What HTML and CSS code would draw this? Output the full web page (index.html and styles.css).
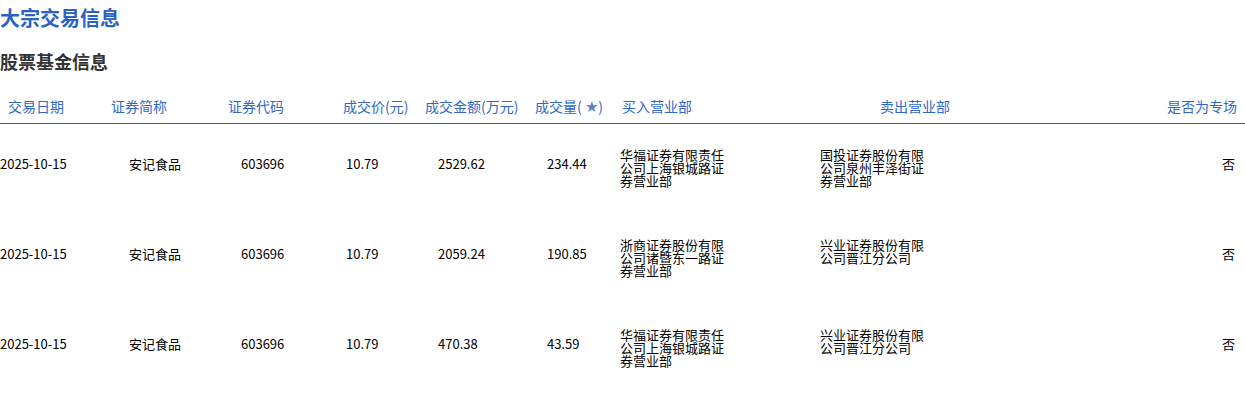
FILE: index.html
```html
<!DOCTYPE html>
<html lang="zh-CN">
<head>
<meta charset="utf-8">
<title>大宗交易信息</title>
<link rel="stylesheet" href="styles.css">
</head>
<body>
<h2 class="title">大宗交易信息</h2>
<h3 class="subtitle">股票基金信息</h3>
<div class="table">
  <div class="thead">
    <div>交易日期</div>
    <div>证券简称</div>
    <div>证券代码</div>
    <div>成交价(元)</div>
    <div>成交金额(万元)</div>
    <div>成交量( <span class="star">★</span>)</div>
    <div>买入营业部</div>
    <div>卖出营业部</div>
    <div class="end">是否为专场</div>
  </div>
  <div class="row">
    <div class="cell">2025-10-15</div>
    <div class="cell">安记食品</div>
    <div class="cell">603696</div>
    <div class="cell">10.79</div>
    <div class="cell">2529.62</div>
    <div class="cell">234.44</div>
    <div class="branch">华福证券有限责任公司上海银城路证券营业部</div>
    <div class="branch">国投证券股份有限公司泉州丰泽街证券营业部</div>
    <div class="cell end">否</div>
  </div>
  <div class="row">
    <div class="cell">2025-10-15</div>
    <div class="cell">安记食品</div>
    <div class="cell">603696</div>
    <div class="cell">10.79</div>
    <div class="cell">2059.24</div>
    <div class="cell">190.85</div>
    <div class="branch">浙商证券股份有限公司诸暨东一路证券营业部</div>
    <div class="branch">兴业证券股份有限公司晋江分公司</div>
    <div class="cell end">否</div>
  </div>
  <div class="row">
    <div class="cell">2025-10-15</div>
    <div class="cell">安记食品</div>
    <div class="cell">603696</div>
    <div class="cell">10.79</div>
    <div class="cell">470.38</div>
    <div class="cell">43.59</div>
    <div class="branch">华福证券有限责任公司上海银城路证券营业部</div>
    <div class="branch">兴业证券股份有限公司晋江分公司</div>
    <div class="cell end">否</div>
  </div>
</div>
</body>
</html>
```
FILE: styles.css
```css
html, body {
  margin: 0;
  padding: 0;
  background: #fff;
}
body {
  font-family: "Noto Sans CJK SC", "Noto Sans", sans-serif;
  color: #000;
  width: 1245px;
}
.title {
  margin: 0;
  font-size: 20px;
  line-height: 36px;
  font-weight: 700;
  color: #2962c4;
}
.subtitle {
  margin: 12px 0 0;
  font-size: 18px;
  line-height: 26px;
  font-weight: 700;
  color: #333;
}
.thead {
  display: grid;
  grid-template-columns: 103px 117px 115px 82px 110px 87px 258px 1fr auto;
  margin-top: 15px;
  padding: 7px 8px 6px 8px;
  font-size: 14px;
  line-height: 20px;
  color: #3168c8;
  border-bottom: 1px solid #2d5fb5;
  white-space: pre;
}
.star {
  font-family: "DejaVu Sans", sans-serif;
  font-size: 15px;
  color: #5a82cf;
}
.row {
  display: grid;
  grid-template-columns: 129px 112px 105px 92px 109px 73px 200px 1fr auto;
  align-items: start;
  height: 90px;
  box-sizing: border-box;
  padding: 24px 10px 0 0;
  font-size: 13px;
}
.cell {
  line-height: 31px;
  white-space: nowrap;
}
.branch {
  width: 104px;
  line-height: 13px;
}
.end {
  text-align: right;
}
```
